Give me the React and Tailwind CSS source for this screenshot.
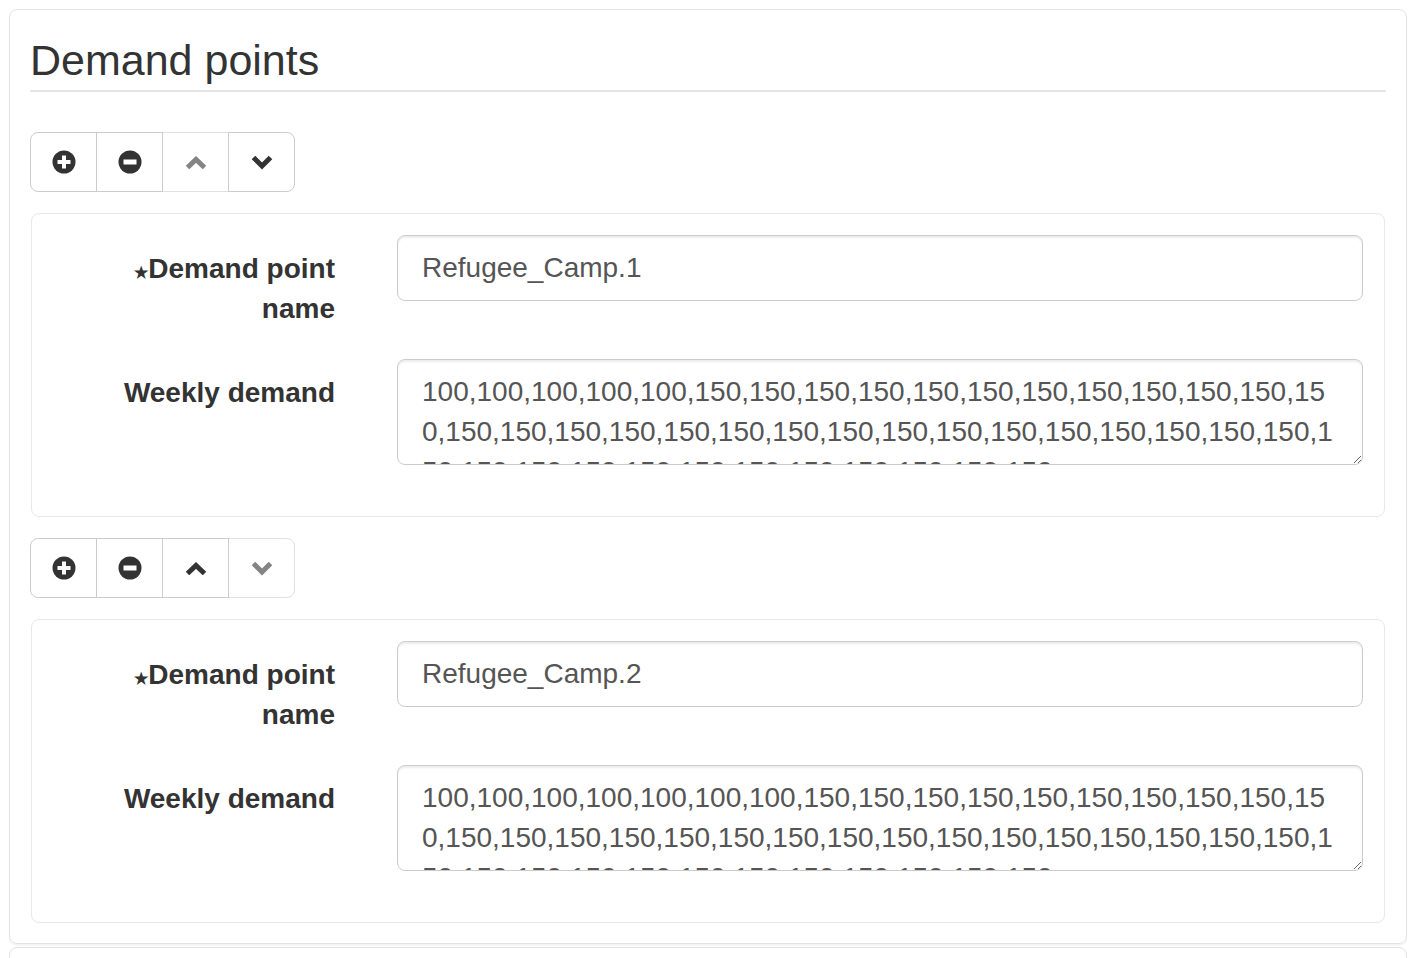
import React from "react";

const demands = [
  {
    name: "Refugee_Camp.1",
    weekly:
      "100,100,100,100,100," +
      Array(40).fill("150").join(","),
    disableUp: true,
    disableDown: false,
  },
  {
    name: "Refugee_Camp.2",
    weekly:
      "100,100,100,100,100,100,100," +
      Array(38).fill("150").join(","),
    disableUp: false,
    disableDown: true,
  },
];

const PlusSign = () => (
  <svg width="24" height="24" viewBox="0 0 24 24">
    <circle cx="12" cy="12" r="11.5" fill="#333" />
    <rect x="10" y="5.5" width="4" height="13" fill="#fff" />
    <rect x="5.5" y="10" width="13" height="4" fill="#fff" />
  </svg>
);

const MinusSign = () => (
  <svg width="24" height="24" viewBox="0 0 24 24">
    <circle cx="12" cy="12" r="11.5" fill="#333" />
    <rect x="5.5" y="9.5" width="13" height="5" fill="#fff" />
  </svg>
);

const ChevronUp = () => (
  <svg width="22" height="13" viewBox="0 0 22 13">
    <polyline
      points="2.5,11.5 11,3.5 19.5,11.5"
      fill="none"
      stroke="#333"
      strokeWidth="5"
      strokeLinejoin="miter"
    />
  </svg>
);

const ChevronDown = () => (
  <svg width="22" height="15" viewBox="0 0 22 15">
    <polyline
      points="2.5,2.5 11,11 19.5,2.5"
      fill="none"
      stroke="#333"
      strokeWidth="5"
      strokeLinejoin="miter"
    />
  </svg>
);

const ToolButton = ({ children, disabled }) => (
  <button
    type="button"
    className={
      "w-[67px] h-[60px] flex items-center justify-center border border-[#ccc] bg-white -ml-px first:ml-0 first:rounded-l-[8px] last:rounded-r-[8px] " +
      (disabled ? "opacity-60" : "")
    }
  >
    {children}
  </button>
);

const DemandItem = ({ item }) => (
  <div>
    {/* toolbar */}
    <div className="inline-flex">
      <ToolButton>
        <PlusSign />
      </ToolButton>
      <ToolButton>
        <MinusSign />
      </ToolButton>
      <ToolButton disabled={item.disableUp}>
        <ChevronUp />
      </ToolButton>
      <ToolButton disabled={item.disableDown}>
        <ChevronDown />
      </ToolButton>
    </div>

    {/* fields */}
    <div className="mt-[21px] mx-px border border-[#e8e8e8] rounded-[8px] pt-[21px] pb-[51px] pr-[21px]">
      <div className="flex mb-[30px]">
        <label className="w-[304px] shrink-0 text-right pt-[14px] pr-px font-bold text-[28px] leading-[40px] text-[#333]">
          <span className="text-[16px] leading-none align-baseline">★</span>
          Demand point
          <br />
          name
        </label>
        <div className="ml-[61px] flex-1">
          <input
            type="text"
            readOnly
            value={item.name}
            className="w-full h-[66px] px-[24px] py-[12px] border border-[#ccc] rounded-[8px] shadow-[inset_0_2px_2px_rgba(0,0,0,0.075)] text-[28px] leading-[40px] text-[#555] outline-none"
          />
        </div>
      </div>
      <div className="flex">
        <label className="w-[304px] shrink-0 text-right pt-[14px] pr-px font-bold text-[28px] leading-[40px] text-[#333]">
          Weekly demand
        </label>
        <div className="ml-[61px] flex-1">
          <textarea
            readOnly
            value={item.weekly}
            className="block w-full h-[106px] px-[24px] py-[12px] border border-[#ccc] rounded-[8px] shadow-[inset_0_2px_2px_rgba(0,0,0,0.075)] text-[28px] leading-[40px] text-[#555] outline-none overflow-hidden resize-y"
          />
        </div>
      </div>
    </div>
  </div>
);

const App = () => {
  return (
    <div className="bg-white h-[958px] overflow-hidden font-['Liberation_Sans',Helvetica,Arial,sans-serif] text-[#333]">
      <div className="mt-[9px] mx-[9px] border border-[#e3e3e3] rounded-[8px] px-5 pt-5 pb-5 shadow-[0_2px_2px_rgba(0,0,0,0.05)]">
        <legend className="block w-full text-[43px] leading-[60px] text-[#333] border-b-2 border-[#e5e5e5] mb-[40px]">
          Demand points
        </legend>

        <div className="flex flex-col gap-[21px]">
          {demands.map((item) => (
            <DemandItem key={item.name} item={item} />
          ))}
        </div>
      </div>

      {/* next panel, cut off by the window */}
      <div className="mt-[3px] mx-[9px] h-[60px] border border-[#e3e3e3] rounded-t-[8px]" />
    </div>
  );
};

export default App;
